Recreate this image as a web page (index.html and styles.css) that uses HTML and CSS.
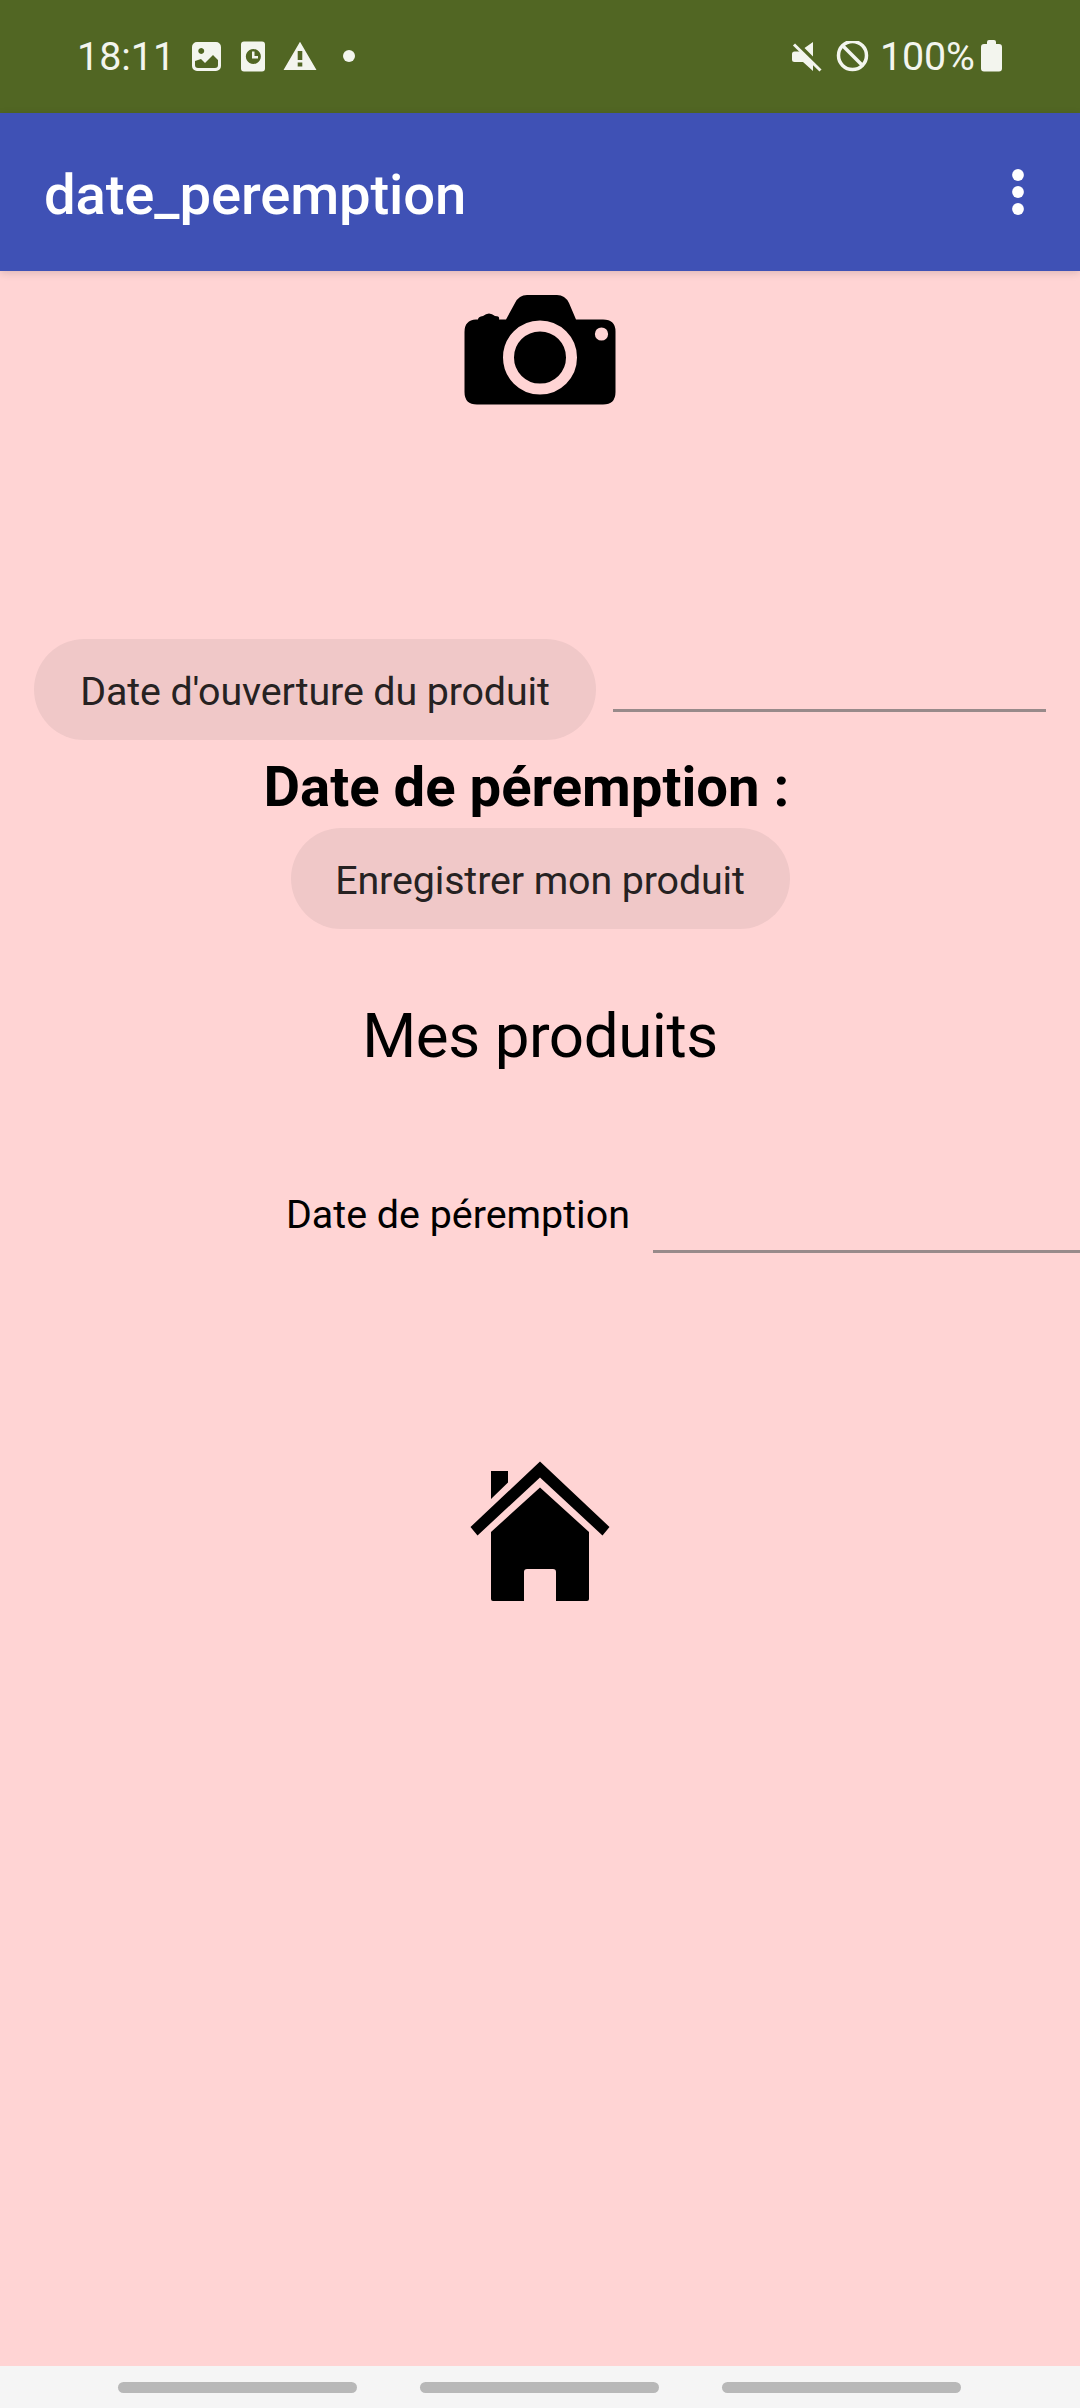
FILE: index.html
```html
<!DOCTYPE html>
<html lang="fr">
<head>
<meta charset="utf-8">
<title>date_peremption</title>
<link rel="stylesheet" href="styles.css">
</head>
<body>
<div class="screen">
  <header class="status">
    <span class="clock">18:11</span>
    <svg class="notices" viewBox="0 0 180 40" fill="#f3f5ee">
      <path fill-rule="evenodd" d="M7 1h19a5 5 0 0 1 5 5v19a5 5 0 0 1-5 5H7a5 5 0 0 1-5-5V6a5 5 0 0 1 5-5zM5 20v4q0 3 3 3h17q3 0 3-3v-5l-5-5-8 8-4-4zM11.200 7a3 3 0 1 0 .1 0z"/>
      <path fill-rule="evenodd" d="M54 .500h18a3 3 0 0 1 3 3v24a3 3 0 0 1-3 3H54a3 3 0 0 1-3-3v-24a3 3 0 0 1 3-3zM63.300 8a7.500 7.500 0 1 0 .1 0zM62 10.500h2.500V15H68v2.500h-6z"/>
      <path fill-rule="evenodd" d="M110 .800 126.500 29H93.500zM107.700 10h4.600v9h-4.600zM107.700 21.500h4.600v4h-4.600z"/>
      <circle cx="159" cy="15" r="6"/>
    </svg>
    <svg class="modes" viewBox="0 0 80 40" fill="#f3f5ee">
      <path d="M2 13q0-2.500 2.500-2.500H11L23 22v8L13 21H4.500Q2 21 2 18.500zM14.500 7 23 1v14.500z"/>
      <path d="M4 3.500 30.500 29.500" fill="none" stroke="#f3f5ee" stroke-width="3"/>
      <circle cx="62.500" cy="14.500" r="14" fill="none" stroke="#f3f5ee" stroke-width="3.500"/>
      <path d="m52.500 4.500 20 20" stroke="#f3f5ee" stroke-width="3.500"/>
    </svg>
    <span class="charge">100%</span>
    <svg class="battery" viewBox="0 0 21 32" fill="#f3f5ee"><path d="M6 4V2q0-2 2-2h5q2 0 2 2v2h3q3 0 3 3v21.500q0 3-3 3H3q-3 0-3-3V7q0-3 3-3z"/></svg>
  </header>
  <div class="appbar">
    <h1 class="title">date_peremption</h1>
    <svg class="more" viewBox="0 0 12 46" fill="#fff"><circle cx="6" cy="6" r="5.900"/><circle cx="6" cy="23" r="5.900"/><circle cx="6" cy="40" r="5.900"/></svg>
  </div>
  <main class="content">
    <svg class="camera" viewBox="0 0 152 110">
      <path d="M12 24.500h2q0-3 5-3.500 6-5 12 0 5 0 4 3.500h7L51 8q4-8 12-8h30q8 0 12 8l7 16.500h27q12.500 0 12.500 12V97q0 12.500-12.500 12.500H13Q.500 109.500.500 97V37q0-12 11.500-12.500z"/>
      <circle cx="76" cy="62.500" r="31.500" fill="none" stroke="#ffd4d4" stroke-width="11"/>
      <circle cx="137.500" cy="39" r="6.600" fill="#ffd4d4"/>
    </svg>
    <div class="opening">
      <button class="pill pill-date">Date d'ouverture du produit</button>
      <span class="field"></span>
    </div>
    <h2 class="expiry">Date de péremption :</h2>
    <button class="pill pill-save">Enregistrer mon produit</button>
    <h2 class="products">Mes produits</h2>
    <div class="product">
      <span class="label">Date de péremption</span>
      <span class="line"></span>
    </div>
    <svg class="home" viewBox="0 0 140 140">
      <path d="M70 .500 139.500 66l-7 8.500L70 16.500 7.500 74.500.500 66zM21 10h17v11.500L21 38zM70 26.500 119 71v67q0 2-2 2H86v-29q0-3-3-3H57q-3 0-3 3v29H23q-2 0-2-2V71z"/>
    </svg>
  </main>
  <nav class="navbar"><span class="handle"></span><span class="handle"></span><span class="handle"></span></nav>
</div>
</body>
</html>
```

FILE: styles.css
```css
* { box-sizing: border-box; }
body { margin: 0; font-family: Roboto, "Liberation Sans", sans-serif; }
h1, h2 { margin: 0; }
svg { display: block; flex: none; }
.screen { width: 1080px; height: 2408px; display: flex; flex-direction: column; overflow: hidden; background: #ffd4d4; }

.status { height: 113px; flex: none; display: flex; align-items: flex-start; padding: 37px 0 0 77px; background: #516623; color: #f3f5ee; font-size: 39.4px; line-height: 39px; }
.clock { width: 113px; }
.notices { width: 180px; height: 40px; margin-top: 4px; }
.modes { width: 80px; height: 40px; margin: 4px 0 0 420px; }
.charge { width: 100px; margin-left: 10px; letter-spacing: -.1px; }
.battery { width: 21px; height: 32px; margin-top: 3px; margin-left: 1px; }

.appbar { height: 158px; flex: none; display: flex; align-items: flex-start; justify-content: space-between; padding: 49px 56px 0 44px; background: #3f51b5; box-shadow: 0 2px 8px rgba(0, 0, 0, .14); }
.title { color: #fff; font-size: 56.25px; font-weight: 500; line-height: 66px; letter-spacing: -.13px; }
.more { width: 12px; height: 46px; margin-top: 7px; }

.content { flex: 1; display: flex; flex-direction: column; align-items: center; }
.camera { width: 152px; height: 110px; margin-top: 24px; }
.opening { width: 100%; height: 101px; margin-top: 234px; padding-left: 34px; display: flex; }
.pill { height: 101px; padding: 4px 0 0; border: 0; border-radius: 51px; background: #f0c8c8; color: #262222; font: 39.4px Roboto, sans-serif; letter-spacing: -.12px; white-space: nowrap; }
.pill-date { width: 562px; }
.pill-save { width: 499px; }
.field { width: 433px; height: 73px; margin-left: 17px; border-bottom: 3px solid #988a8a; }
.expiry { height: 88px; margin-right: 27px; padding-top: 6px; font-size: 56.25px; line-height: 82px; font-weight: 700; white-space: nowrap; }
.products { margin-top: 71px; font-size: 61.9px; font-weight: 400; line-height: 72px; letter-spacing: -.45px; }
.product { width: 100%; height: 70px; margin-top: 111px; padding-left: 286px; display: flex; justify-content: space-between; }
.label { margin-top: 8px; font-size: 39.4px; line-height: 47px; white-space: nowrap; }
.line { width: 427px; border-bottom: 3px solid #988a8a; }
.home { width: 140px; height: 140px; margin-top: 208px; }

.navbar { height: 42px; flex: none; display: flex; gap: 63px; padding: 16px 0 0 118px; background: #f5f5f5; }
.handle { width: 239px; height: 11px; border-radius: 6px; background: #b8b8b8; }
```
